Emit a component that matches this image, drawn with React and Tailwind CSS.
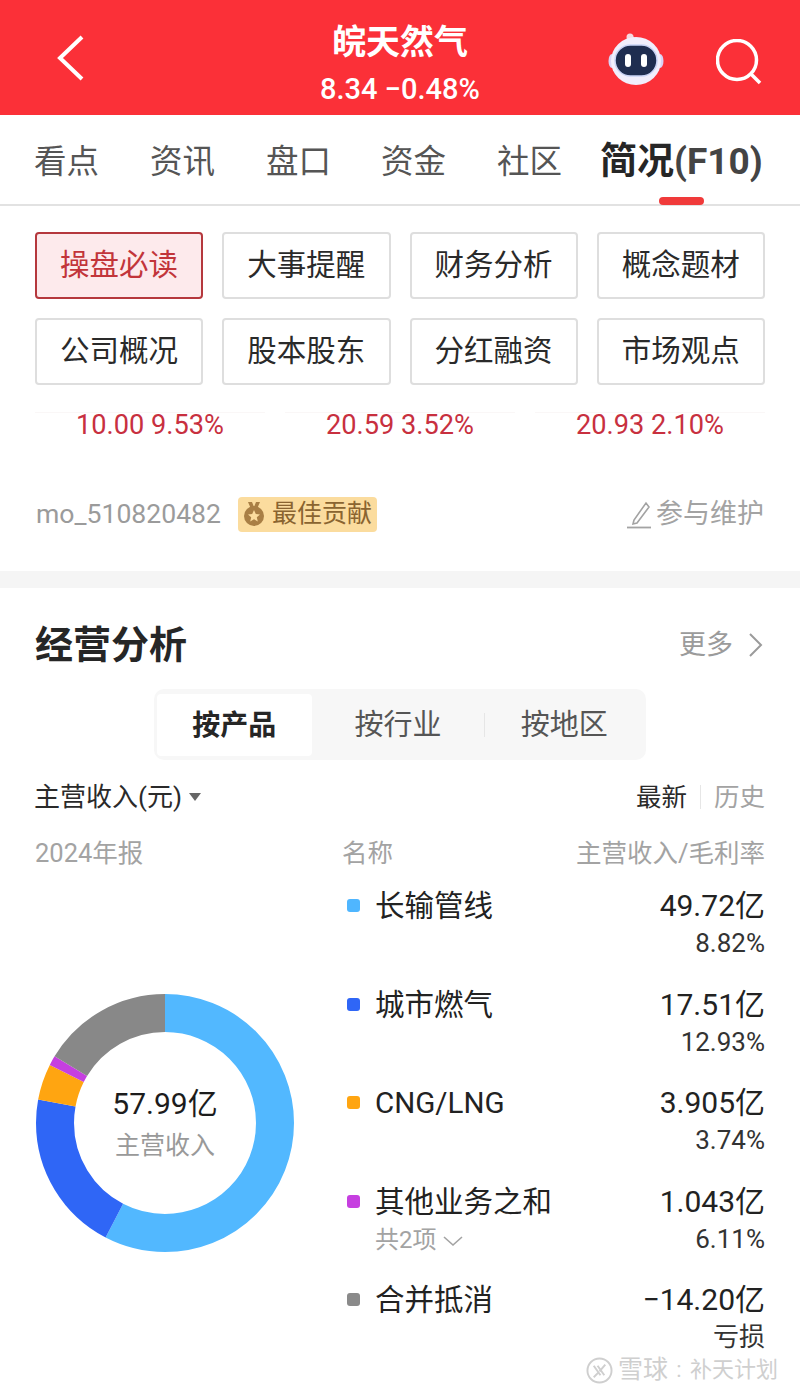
import React from 'react';

const FONT = '[font-family:Roboto,"Noto_Sans_CJK_SC",sans-serif]';

const tabs = ['看点', '资讯', '盘口', '资金', '社区'];
const tabWidths = ['w-[116px]', 'w-[116px]', 'w-[115px]', 'w-[116px]', 'w-[104px]'];

const shortcuts = [
  '操盘必读', '大事提醒', '财务分析', '概念题材',
  '公司概况', '股本股东', '分红融资', '市场观点',
];

const quotes = ['10.00 9.53%', '20.59 3.52%', '20.93 2.10%'];

const rows = [
  { name: '长输管线', value: '49.72亿', rate: '8.82%', dot: 'bg-[#4fb6ff]', amount: 49.72, color: '#52b8ff' },
  { name: '城市燃气', value: '17.51亿', rate: '12.93%', dot: 'bg-[#2f66f6]', amount: 17.51, color: '#2f66f6' },
  { name: 'CNG/LNG', value: '3.905亿', rate: '3.74%', dot: 'bg-[#ffa511]', amount: 3.905, color: '#ffa511' },
  { name: '其他业务之和', value: '1.043亿', rate: '6.11%', dot: 'bg-[#c63fe0]', amount: 1.043, color: '#c63fe0', more: '共2项' },
  { name: '合并抵消', value: '−14.20亿', rate: '亏损', dot: 'bg-[#8a8a8a]', amount: 14.2, color: '#888888' },
];

const Robot = () => (
  <svg width="58" height="60" viewBox="0 0 58 60">
    <path d="M29 14 C29 11 27 10 24 9" fill="none" stroke="#f3dfe8" strokeWidth="2" />
    <circle cx="23" cy="9" r="3.5" fill="#f6d9e0" />
    <ellipse cx="5" cy="33" rx="3.5" ry="7" fill="#d9d2f5" />
    <ellipse cx="53" cy="33" rx="3.5" ry="7" fill="#d9d2f5" />
    <ellipse cx="29" cy="33" rx="25" ry="24" fill="#f1eefc" />
    <rect x="8" y="17" width="42" height="31" rx="15.5" fill="#1f2d50" stroke="#c9d3f5" strokeWidth="1.5" />
    <rect x="18" y="26" width="6" height="13" rx="3" fill="#ffffff" />
    <rect x="34" y="26" width="6" height="13" rx="3" fill="#ffffff" />
  </svg>
);

const Donut = () => {
  const total = rows.reduce((sum, r) => sum + r.amount, 0);
  const radius = 110;
  const circumference = 2 * Math.PI * radius;
  let offset = 0;

  return (
    <div className="relative h-[260px] w-[260px]">
      <svg width="260" height="260" viewBox="0 0 260 260" className="-rotate-90">
        {rows.map((r) => {
          const length = (r.amount / total) * circumference;
          const segment = (
            <circle
              key={r.name}
              cx="130"
              cy="130"
              r={radius}
              fill="none"
              stroke={r.color}
              strokeWidth="38"
              strokeDasharray={`${length} ${circumference - length}`}
              strokeDashoffset={-offset}
            />
          );
          offset += length;
          return segment;
        })}
      </svg>
      <div className="absolute inset-0 flex flex-col items-center justify-center">
        <span className="text-[30px] leading-[38px] text-[#1c1c1c]">57.99亿</span>
        <span className="mt-[8px] text-[25px] leading-[30px] text-[#999999]">主营收入</span>
      </div>
    </div>
  );
};

const LegendRow = ({ name, value, rate, dot, more }) => (
  <div className="flex h-[98.5px] justify-between">
    <div className="flex items-start">
      <span className={`ml-[5px] mt-[15px] h-[13px] w-[13px] rounded-[3px] ${dot}`} />
      <div className="ml-[15px] flex flex-col">
        <span className="text-[29.5px] leading-[44px] text-[#222222]">{name}</span>
        {more && (
          <span className="flex items-center text-[24px] leading-[32px] text-[#a3a3a3]">
            {more}
            <svg width="22" height="12" viewBox="0 0 22 12" className="ml-[5px] mt-[3px]">
              <path d="M2 2 L11 10 L20 2" fill="none" stroke="#a3a3a3" strokeWidth="1.6" />
            </svg>
          </span>
        )}
      </div>
    </div>
    <div className="flex flex-col items-end">
      <span className="text-[30px] leading-[44px] text-[#222222]">{value}</span>
      <span className="text-[26px] leading-[30px] text-[#333333]">{rate}</span>
    </div>
  </div>
);

const App = () => {
  return (
    <div className={`relative h-[1396px] w-[800px] overflow-hidden bg-white ${FONT}`}>
      {/* top bar */}
      <header className="grid h-[115px] grid-cols-[1fr_auto_1fr] items-center bg-[#fb3038]">
        <div className="pl-[56px]">
          <svg width="30" height="48" viewBox="0 0 30 48">
            <path d="M26 3 L4 24 L26 45" fill="none" stroke="#ffffff" strokeWidth="4" />
          </svg>
        </div>
        <div className="flex flex-col items-center pt-[17px] text-white">
          <span className="text-[34px] font-bold leading-[46px]">皖天然气</span>
          <span className="text-[29px] font-medium leading-[48px]">8.34 −0.48%</span>
        </div>
        <div className="flex items-center justify-end pr-[38px]">
          <Robot />
          <svg width="46" height="46" viewBox="0 0 46 46" className="ml-[51px] mt-[9px]">
            <circle cx="21" cy="21" r="19.5" fill="none" stroke="#ffffff" strokeWidth="3.5" />
            <path d="M34 34 L44 44" fill="none" stroke="#ffffff" strokeWidth="3.5" />
          </svg>
        </div>
      </header>

      {/* tabs */}
      <nav className="relative flex h-[91px] items-center border-b-2 border-[#e2e2e2] pl-[34px] pt-[5px]">
        {tabs.map((t, i) => (
          <span key={t} className={`${tabWidths[i]} text-[32.5px] text-[#555555]`}>{t}</span>
        ))}
        <span className="-ml-[1px] text-[37px] font-bold text-[#262626]">
          简况<span className="text-[#444444]">(F10)</span>
        </span>
        <span className="absolute bottom-[-1px] left-[659px] h-[8px] w-[45px] rounded-full bg-[#f03a3a]" />
      </nav>

      {/* shortcuts */}
      <section className="grid grid-cols-4 gap-[19px] px-[35px] pt-[26px]">
        {shortcuts.map((s, i) => (
          <div
            key={s}
            className={
              i === 0
                ? 'flex h-[67px] items-center justify-center rounded-[4px] border-2 border-[#b5383d] bg-[#fdeaec] text-[29.5px] text-[#c2353a]'
                : 'flex h-[67px] items-center justify-center rounded-[4px] border-2 border-[#dedede] text-[29.5px] text-[#2a2a2a]'
            }
          >
            {s}
          </div>
        ))}
      </section>

      {/* related quotes */}
      <section className="mt-[27px] grid grid-cols-3 gap-[20px] px-[35px]">
        {quotes.map((q) => (
          <div key={q} className="border-t border-[#faf7f7] text-center text-[27.2px] leading-[24px] text-[#c8303f]">
            {q}
          </div>
        ))}
      </section>

      {/* contributor */}
      <section className="mt-[59px] flex h-[36px] items-center px-[36px]">
        <span className="text-[26.6px] text-[#9b9b9b]">mo_510820482</span>
        <span className="ml-[17px] flex h-[35px] w-[139px] items-center justify-center rounded-[4px] bg-[#fbdc9e] text-[25px] text-[#8a6430]">
          <svg width="22" height="26" viewBox="0 0 22 26" className="mr-[7px]">
            <path d="M5 1 H9 L11 6 L13 1 H17 L14 8 H8 Z" fill="#a97f45" />
            <circle cx="11" cy="15" r="10" fill="#a97f45" />
            <path d="M11 9 L12.8 13 L17 13.4 L13.8 16.2 L14.8 20.4 L11 18.2 L7.2 20.4 L8.2 16.2 L5 13.4 L9.2 13 Z" fill="#fbdc9e" />
          </svg>
          最佳贡献
        </span>
        <span className="ml-auto flex items-center text-[27px] text-[#a3a3a3]">
          <svg width="26" height="30" viewBox="0 0 26 30" className="mr-[4px]">
            <path d="M8 21 L7 25 L11 24 L23 8 L20 4 Z" fill="none" stroke="#a3a3a3" strokeWidth="1.6" />
            <path d="M1 28.5 H25" stroke="#a3a3a3" strokeWidth="1.8" />
          </svg>
          参与维护
        </span>
      </section>

      <div className="mt-[39px] h-[17px] bg-[#f5f5f5]" />

      {/* business analysis */}
      <section className="px-[35px]">
        <div className="flex h-[114px] items-center justify-between">
          <h2 className="text-[38px] font-bold text-[#262626]">经营分析</h2>
          <span className="flex items-center text-[27px] text-[#9b9b9b]">
            更多
            <svg width="16" height="26" viewBox="0 0 16 26" className="ml-[15px] mr-[1px]">
              <path d="M2 2 L13 13 L2 24" fill="none" stroke="#9b9b9b" strokeWidth="2" />
            </svg>
          </span>
        </div>

        <div className="-mt-[13px] ml-[119px] flex h-[71px] w-[492px] items-center rounded-[10px] bg-[#f7f7f7] px-[3px]">
          <span className="flex h-[62px] w-[156px] items-center justify-center rounded-[4px] bg-white pt-[2px] text-[28px] font-bold text-[#262626]">按产品</span>
          <span className="w-[174px] pt-[2px] text-center text-[29px] text-[#555555]">按行业</span>
          <span className="h-[24px] w-px bg-[#e6e6e6]" />
          <span className="w-[159px] pt-[2px] text-center text-[29px] text-[#555555]">按地区</span>
        </div>

        <div className="mt-[18px] flex h-[38px] items-center">
          <span className="-ml-[1px] text-[26px] text-[#2a2a2a]">主营收入(元)</span>
          <svg width="14" height="10" viewBox="0 0 14 10" className="ml-[6px]">
            <path d="M1 1 H13 L7 9 Z" fill="#666666" />
          </svg>
          <span className="ml-auto text-[25.5px] text-[#2a2a2a]">最新</span>
          <span className="mx-[13px] h-[24px] w-px bg-[#e6e6e6]" />
          <span className="text-[25.5px] text-[#a3a3a3]">历史</span>
        </div>

        <div className="mt-[17px] grid h-[40px] grid-cols-[307px_1fr_auto] items-center text-[25.5px] text-[#a3a3a3]">
          <span>2024年报</span>
          <span>名称</span>
          <span>主营收入/毛利率</span>
        </div>

        <div className="mt-[11px] flex">
          <div className="mt-[109px] w-[307px] shrink-0">
            <Donut />
          </div>
          <div className="min-w-0 flex-1">
            {rows.map((r) => (
              <LegendRow key={r.name} {...r} />
            ))}
          </div>
        </div>
      </section>

      {/* watermark */}
      <div className="absolute bottom-[11px] right-[22px] flex items-center text-[22px] leading-[30px] text-[#cfcfcf]">
        <svg width="27" height="27" viewBox="0 0 28 28" className="mr-[5px]">
          <circle cx="14" cy="14" r="12.5" fill="none" stroke="#cfcfcf" strokeWidth="2" />
          <path d="M8 9 L15 19 M12 9 L19 19 M20 8 L14 15 M13 16 L8 21" fill="none" stroke="#cfcfcf" strokeWidth="2" />
        </svg>
        <span className="text-[25px]">雪球</span>
        <span className="w-[22px] text-center text-[22px]">:</span>
        补天计划
      </div>
    </div>
  );
};

export default App;
